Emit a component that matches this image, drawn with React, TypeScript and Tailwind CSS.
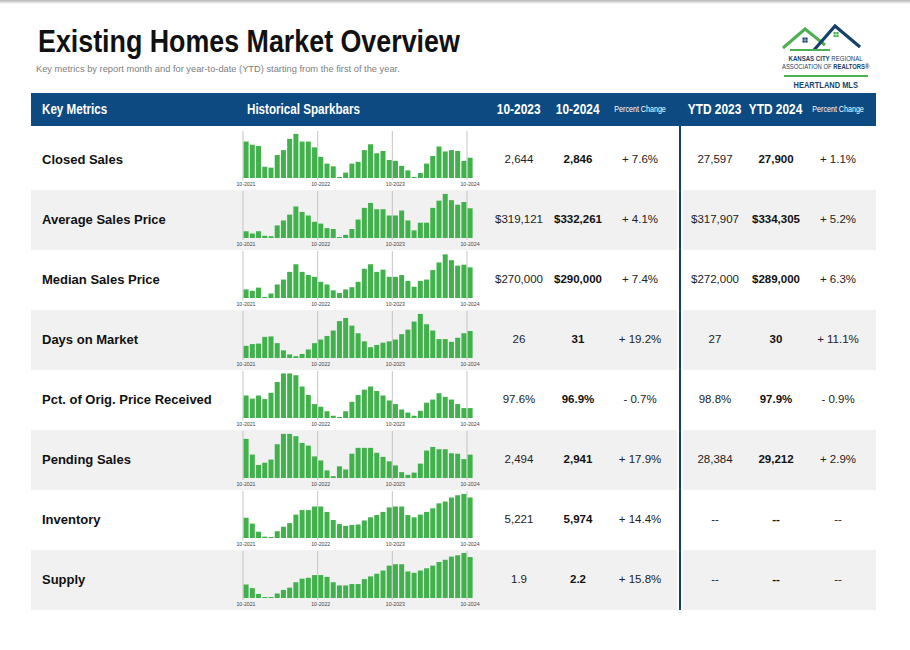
import React from "react";

type Row = {
  label: string;
  bars: number[];
  values: [string, string, string, string, string, string];
};

const rows: Row[] = [
  {
    label: "Closed Sales",
    bars: [81, 74, 71, 25, 23, 51, 62, 87, 98, 81, 81, 68, 47, 32, 26, 2, 12, 32, 36, 62, 75, 55, 60, 40, 38, 27, 17, 2, 11, 32, 49, 70, 59, 62, 60, 38, 45],
    values: ["2,644", "2,846", "+ 7.6%", "27,597", "27,900", "+ 1.1%"]
  },
  {
    label: "Average Sales Price",
    bars: [15, 10, 15, 5, 4, 28, 39, 52, 70, 58, 50, 36, 32, 22, 20, 2, 7, 20, 41, 67, 78, 64, 64, 50, 50, 61, 39, 17, 34, 34, 67, 83, 98, 84, 74, 80, 66],
    values: ["$319,121", "$332,261", "+ 4.1%", "$317,907", "$334,305", "+ 5.2%"]
  },
  {
    label: "Median Sales Price",
    bars: [19, 16, 23, 2, 10, 30, 41, 58, 75, 58, 51, 47, 36, 30, 17, 11, 19, 24, 36, 65, 75, 58, 63, 47, 47, 51, 38, 25, 38, 41, 62, 79, 97, 84, 72, 74, 68],
    values: ["$270,000", "$290,000", "+ 7.4%", "$272,000", "$289,000", "+ 6.3%"]
  },
  {
    label: "Days on Market",
    bars: [27, 31, 32, 47, 48, 33, 17, 8, 4, 9, 19, 33, 41, 49, 61, 82, 89, 72, 55, 37, 24, 29, 34, 37, 41, 53, 63, 81, 98, 75, 61, 42, 42, 36, 45, 55, 60],
    values: ["26", "31", "+ 19.2%", "27", "30", "+ 11.1%"]
  },
  {
    label: "Pct. of Orig. Price Received",
    bars: [50, 43, 50, 42, 56, 80, 99, 99, 95, 70, 51, 31, 25, 15, 5, 2, 15, 36, 51, 63, 70, 60, 50, 39, 31, 19, 12, 5, 16, 34, 41, 55, 47, 41, 31, 22, 22],
    values: ["97.6%", "96.9%", "- 0.7%", "98.8%", "97.9%", "- 0.9%"]
  },
  {
    label: "Pending Sales",
    bars: [87, 52, 29, 34, 41, 75, 98, 98, 93, 78, 72, 48, 39, 17, 4, 26, 19, 54, 67, 67, 67, 56, 47, 37, 28, 13, 7, 12, 32, 61, 69, 64, 64, 55, 54, 42, 52],
    values: ["2,494", "2,941", "+ 17.9%", "28,384", "29,212", "+ 2.9%"]
  },
  {
    label: "Inventory",
    bars: [45, 32, 14, 3, 2, 15, 25, 33, 52, 62, 62, 70, 70, 58, 40, 31, 27, 29, 30, 39, 46, 51, 58, 68, 70, 70, 51, 46, 52, 58, 66, 77, 81, 90, 95, 98, 90],
    values: ["5,221", "5,974", "+ 14.4%", "--", "--", "--"]
  },
  {
    label: "Supply",
    bars: [30, 22, 9, 2, 2, 10, 18, 23, 35, 43, 45, 51, 51, 47, 35, 28, 28, 31, 31, 42, 48, 54, 61, 72, 75, 75, 59, 56, 61, 66, 72, 80, 85, 92, 95, 100, 91],
    values: ["1.9", "2.2", "+ 15.8%", "--", "--", "--"]
  }
];

const grid =
  "grid grid-cols-[204px_253px_62px_56px_68px_12px_58px_64px_60px_8px]";

// Arial Narrow is Arial squeezed to ~82%; no narrow face is installed, so squeeze by transform
const squeeze = "inline-block whitespace-nowrap scale-x-[0.83]";

function Sparkbars({ bars }: { bars: number[] }) {
  const step = 74.67 / 12;
  const lines = [8, 8 + step * 12, 8 + step * 24, 8 + step * 36];
  const labels = ["10-2021", "10-2022", "10-2023", "10-2024"];
  return (
    <svg width="253" height="60" viewBox="0 0 253 60" className="block">
      {lines.map((x) => (
        <line key={x} x1={x} x2={x} y1={1} y2={50} stroke="#c4c4c4" strokeWidth={1} />
      ))}
      {bars.map((h, i) => {
        const height = Math.max(1, (h / 100) * 45);
        return (
          <rect
            key={i}
            x={8.6 + i * step}
            y={48 - height}
            width={5}
            height={height}
            fill="#41b24b"
          />
        );
      })}
      {labels.map((label, i) => (
        <text
          key={label}
          x={lines[i] + 3}
          y={55.5}
          textAnchor="middle"
          fontSize={5.2}
          fill="#444"
          fontFamily="Liberation Sans, Arial, sans-serif"
        >
          {label}
        </text>
      ))}
    </svg>
  );
}

function Logo() {
  return (
    <div className="flex w-[96px] flex-col items-center text-[#173f6b]">
      <svg width="92" height="30" viewBox="0 0 92 30">
        <polyline points="3,25 25,6 45,22" fill="none" stroke="#4cb050" strokeWidth={3} />
        <polyline points="34,27 55,3 80,24" fill="none" stroke="#173f6b" strokeWidth={3.2} />
        <line x1="10" y1="27" x2="50" y2="27" stroke="#4cb050" strokeWidth={2.2} />
        <g fill="#173f6b">
          <rect x="22.5" y="14.5" width="2.3" height="2.3" />
          <rect x="25.3" y="14.5" width="2.3" height="2.3" />
          <rect x="22.5" y="17.3" width="2.3" height="2.3" />
          <rect x="25.3" y="17.3" width="2.3" height="2.3" />
        </g>
        <g fill="#4cb050">
          <rect x="53.5" y="9" width="2.3" height="2.3" />
          <rect x="56.3" y="9" width="2.3" height="2.3" />
          <rect x="53.5" y="11.8" width="2.3" height="2.3" />
          <rect x="56.3" y="11.8" width="2.3" height="2.3" />
        </g>
      </svg>
      <p className="mt-[1px] text-center text-[7.3px] leading-[9px]">
        <span className={squeeze}>
          <span className="font-bold">KANSAS CITY</span> REGIONAL
        </span>
      </p>
      <p className="text-center text-[7.1px] leading-[9px]">
        <span className={squeeze}>
          ASSOCIATION OF <span className="font-bold">REALTORS®</span>
        </span>
      </p>
      <div className="mt-[3px] h-[1.5px] w-[84px] bg-[#4cb050]" />
      <p className="mt-[3px] text-center text-[9px] font-bold leading-[10px]">
        <span className={squeeze}>HEARTLAND MLS</span>
      </p>
    </div>
  );
}

function Divider() {
  return (
    <div className="flex justify-center">
      <div className="w-[6px] bg-white px-[2px]">
        <div className="h-full w-[2px] bg-[#173f5f]" />
      </div>
    </div>
  );
}

function HeadCell({ children, small }: { children: React.ReactNode; small?: boolean }) {
  return (
    <span className="flex justify-center">
      <span
        className={
          small
            ? "inline-block whitespace-nowrap text-[8.6px] font-normal text-white scale-x-[0.83]"
            : "inline-block whitespace-nowrap text-[14px] scale-x-[0.85]"
        }
      >
        {children}
      </span>
    </span>
  );
}

export default function App() {
  return (
    <div className="h-[650px] w-[910px] overflow-hidden bg-white font-['Liberation_Sans',Arial,sans-serif] text-[#222]">
      <div className="h-[4px] bg-gradient-to-b from-[#b5b5b5] to-white" />

      <div className="flex h-[89px] items-start justify-between pl-[36px] pr-[36px]">
        <div className="pt-[22px]">
          <h1 className="pl-[2px] text-[31px] font-bold leading-[31px] text-[#111]">
            <span className="inline-block origin-left scale-x-[0.865] whitespace-nowrap">
              Existing Homes Market Overview
            </span>
          </h1>
          <p className="mt-[7px] text-[9.3px] leading-[11px] text-[#808080]">
            Key metrics by report month and for year-to-date (YTD) starting from the first of the year.
          </p>
        </div>
        <div className="pt-[19px]">
          <Logo />
        </div>
      </div>

      <div className="ml-[31px] w-[845px]">
        <div className={`${grid} h-[33px] items-center bg-[#0e4a82] font-bold text-white`}>
          <span className="pl-[11px] text-[14px]">
            <span className="inline-block origin-left scale-x-[0.83] whitespace-nowrap">Key Metrics</span>
          </span>
          <span className="pl-[12px] text-[14px]">
            <span className="inline-block origin-left scale-x-[0.83] whitespace-nowrap">Historical Sparkbars</span>
          </span>
          <HeadCell>10-2023</HeadCell>
          <HeadCell>10-2024</HeadCell>
          <HeadCell small>Percent Change</HeadCell>
          <span />
          <HeadCell>YTD 2023</HeadCell>
          <HeadCell>YTD 2024</HeadCell>
          <HeadCell small>Percent Change</HeadCell>
          <span />
        </div>

        <div className={`${grid} h-[4px]`}>
          <span className="col-span-5" />
          <Divider />
        </div>

        {rows.map((row, index) => (
          <div
            key={row.label}
            className={`${grid} h-[60px] ${index % 2 === 1 ? "bg-[#f1f1f1]" : "bg-white"}`}
          >
            <div className="flex items-center pl-[11px] text-[13px] font-bold text-[#111]">
              {row.label}
            </div>
            <div>
              <Sparkbars bars={row.bars} />
            </div>
            <div className="flex items-center justify-center whitespace-nowrap text-[11.5px]">
              {row.values[0]}
            </div>
            <div className="flex items-center justify-center whitespace-nowrap text-[11.5px] font-bold text-[#111]">
              {row.values[1]}
            </div>
            <div className="flex items-center justify-center whitespace-nowrap text-[11.5px]">
              {row.values[2]}
            </div>
            <Divider />
            <div className="flex items-center justify-center whitespace-nowrap text-[11.5px]">
              {row.values[3]}
            </div>
            <div className="flex items-center justify-center whitespace-nowrap text-[11.5px] font-bold text-[#111]">
              {row.values[4]}
            </div>
            <div className="flex items-center justify-center whitespace-nowrap text-[11.5px]">
              {row.values[5]}
            </div>
            <span />
          </div>
        ))}
      </div>
    </div>
  );
}
